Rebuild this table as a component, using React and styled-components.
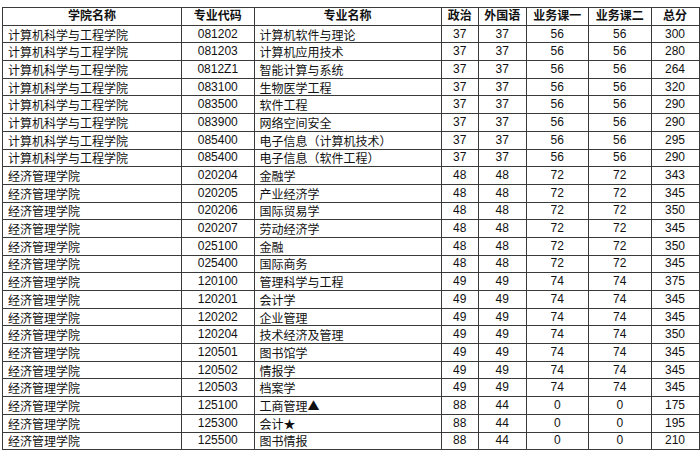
import React from "react";
import styled, { createGlobalStyle } from "styled-components";

const GlobalStyle = createGlobalStyle`
  html, body {
    margin: 0;
    padding: 0;
    background: #fff;
  }
  body {
    font-family: "Liberation Sans", "Noto Sans CJK SC", sans-serif;
    color: #111;
  }
`;

const Page = styled.div`
  width: 700px;
  height: 456px;
  padding: 7px 0 0 2px;
  box-sizing: border-box;
  overflow: hidden;
`;

const Table = styled.table`
  border-collapse: collapse;
  table-layout: fixed;
  width: 697px;
  font-size: 12px;
`;

const Row = styled.tr`
  height: 17.7px;
`;

const Head = styled.th`
  border: 1px solid #3a3a3a;
  padding: 0 4px;
  font-weight: bold;
  text-align: center;
  line-height: 13px;
  vertical-align: middle;
  white-space: nowrap;
  overflow: hidden;
`;

const Cell = styled.td`
  border: 1px solid #3a3a3a;
  padding: 0;
  padding-left: ${(p) => (p.$left ? "5px" : "0")};
  text-align: ${(p) => (p.$left ? "left" : "center")};
  font-family: ${(p) =>
    p.$left
      ? '"Noto Sans CJK SC", sans-serif'
      : '"Liberation Sans", "Noto Sans CJK SC", sans-serif'};
  line-height: 13px;
  vertical-align: middle;
  white-space: nowrap;
  overflow: hidden;
`;

const widths = [179, 72.5, 187, 37.5, 47.5, 62.5, 62.5, 48];
const headers = ["学院名称", "专业代码", "专业名称", "政治", "外国语", "业务课一", "业务课二", "总分"];

const CS = "计算机科学与工程学院";
const EM = "经济管理学院";

const rows = [
  [CS, "081202", "计算机软件与理论", 37, 37, 56, 56, 300],
  [CS, "081203", "计算机应用技术", 37, 37, 56, 56, 280],
  [CS, "0812Z1", "智能计算与系统", 37, 37, 56, 56, 264],
  [CS, "083100", "生物医学工程", 37, 37, 56, 56, 320],
  [CS, "083500", "软件工程", 37, 37, 56, 56, 290],
  [CS, "083900", "网络空间安全", 37, 37, 56, 56, 290],
  [CS, "085400", "电子信息（计算机技术）", 37, 37, 56, 56, 295],
  [CS, "085400", "电子信息（软件工程）", 37, 37, 56, 56, 290],
  [EM, "020204", "金融学", 48, 48, 72, 72, 343],
  [EM, "020205", "产业经济学", 48, 48, 72, 72, 345],
  [EM, "020206", "国际贸易学", 48, 48, 72, 72, 350],
  [EM, "020207", "劳动经济学", 48, 48, 72, 72, 345],
  [EM, "025100", "金融", 48, 48, 72, 72, 350],
  [EM, "025400", "国际商务", 48, 48, 72, 72, 345],
  [EM, "120100", "管理科学与工程", 49, 49, 74, 74, 375],
  [EM, "120201", "会计学", 49, 49, 74, 74, 345],
  [EM, "120202", "企业管理", 49, 49, 74, 74, 345],
  [EM, "120204", "技术经济及管理", 49, 49, 74, 74, 350],
  [EM, "120501", "图书馆学", 49, 49, 74, 74, 345],
  [EM, "120502", "情报学", 49, 49, 74, 74, 345],
  [EM, "120503", "档案学", 49, 49, 74, 74, 345],
  [EM, "125100", "工商管理▲", 88, 44, 0, 0, 175],
  [EM, "125300", "会计★", 88, 44, 0, 0, 195],
  [EM, "125500", "图书情报", 88, 44, 0, 0, 210],
];

export default function App() {
  return (
    <>
      <GlobalStyle />
      <Page>
        <Table>
          <colgroup>
            {widths.map((w, i) => (
              <col key={i} style={{ width: w }} />
            ))}
          </colgroup>
          <thead>
            <Row>
              {headers.map((h) => (
                <Head key={h}>{h}</Head>
              ))}
            </Row>
          </thead>
          <tbody>
            {rows.map((r, i) => (
              <Row key={i}>
                {r.map((v, j) => (
                  <Cell key={j} $left={j === 0 || j === 2}>
                    {v}
                  </Cell>
                ))}
              </Row>
            ))}
          </tbody>
        </Table>
      </Page>
    </>
  );
}
